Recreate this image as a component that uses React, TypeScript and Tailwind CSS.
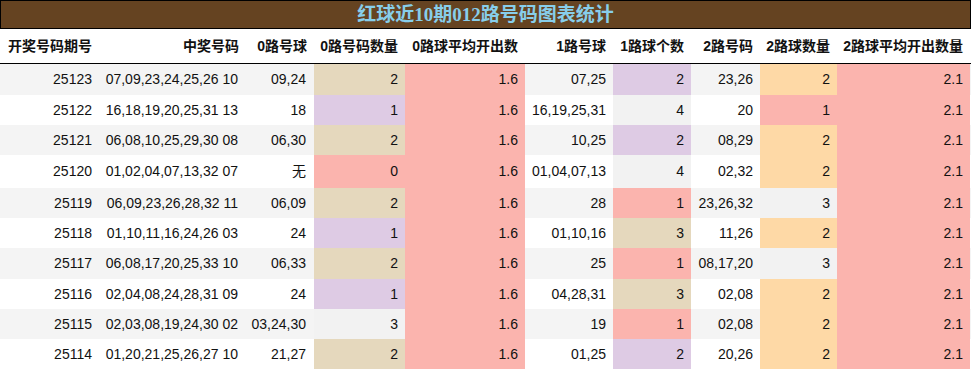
const SALMON = "bg-[#fbb4ae]";
const WHEAT = "bg-[#e5d8bd]";
const LAVENDER = "bg-[#decbe4]";
const PEACH = "bg-[#fed9a6]";
const GRAY = "bg-[#f2f2f2]";

const zeroColor: Record<number, string> = { 0: SALMON, 1: LAVENDER, 2: WHEAT, 3: GRAY };
const oneColor: Record<number, string> = { 1: SALMON, 2: LAVENDER, 3: WHEAT, 4: GRAY };
const twoColor: Record<number, string> = { 1: SALMON, 2: PEACH, 3: GRAY };

const headers = [
  "0路号球",
  "0路号码数量",
  "0路球平均开出数",
  "1路号球",
  "1路球个数",
  "2路号码",
  "2路球数量",
  "2路球平均开出数量",
];

const rows = [
  { id: "25123", win: "07,09,23,24,25,26 10", z: "09,24", zn: 2, o: "07,25", on: 2, t: "23,26", tn: 2, h: "h-[31px]" },
  { id: "25122", win: "16,18,19,20,25,31 13", z: "18", zn: 1, o: "16,19,25,31", on: 4, t: "20", tn: 1, h: "h-[30px]" },
  { id: "25121", win: "06,08,10,25,29,30 08", z: "06,30", zn: 2, o: "10,25", on: 2, t: "08,29", tn: 2, h: "h-[30px]" },
  { id: "25120", win: "01,02,04,07,13,32 07", z: "无", zn: 0, o: "01,04,07,13", on: 4, t: "02,32", tn: 2, h: "h-[33px]" },
  { id: "25119", win: "06,09,23,26,28,32 11", z: "06,09", zn: 2, o: "28", on: 1, t: "23,26,32", tn: 3, h: "h-[30px]" },
  { id: "25118", win: "01,10,11,16,24,26 03", z: "24", zn: 1, o: "01,10,16", on: 3, t: "11,26", tn: 2, h: "h-[30px]" },
  { id: "25117", win: "06,08,17,20,25,33 10", z: "06,33", zn: 2, o: "25", on: 1, t: "08,17,20", tn: 3, h: "h-[31px]" },
  { id: "25116", win: "02,04,08,24,28,31 09", z: "24", zn: 1, o: "04,28,31", on: 3, t: "02,08", tn: 2, h: "h-[30px]" },
  { id: "25115", win: "02,03,08,19,24,30 02", z: "03,24,30", zn: 3, o: "19", on: 1, t: "02,08", tn: 2, h: "h-[30px]" },
  { id: "25114", win: "01,20,21,25,26,27 10", z: "21,27", zn: 2, o: "01,25", on: 2, t: "20,26", tn: 2, h: "h-[30px]" },
];

const cols = "grid grid-cols-[100px_146px_68px_91px_120px_88px_78px_69px_77px_133px]";
const cell = "flex items-center justify-end pr-[7px] whitespace-nowrap";

export default function App() {
  return (
    <div className="w-[972px] h-[370px] bg-white overflow-hidden font-['Liberation_Sans','Noto_Sans_CJK_SC',sans-serif] text-[14px] text-[#111]">
      <div className="w-[971px]">
        {/* title */}
        <div className="h-[29px] bg-[#654321] border border-black flex items-center justify-center">
          <span className="font-['Liberation_Serif','Noto_Sans_CJK_SC',serif] font-bold text-[19px] text-[#87ceeb] leading-none">
            红球近10期012路号码图表统计
          </span>
        </div>

        {/* header */}
        <div className={`${cols} h-[35px] border-b border-black font-bold`}>
          <div className="flex items-center pl-[8px] whitespace-nowrap">开奖号码期号</div>
          <div className={cell}>中奖号码</div>
          {headers.map((h) => (
            <div key={h} className={cell}>
              {h}
            </div>
          ))}
        </div>

        {/* data */}
        {rows.map((r, i) => (
          <div key={r.id} className={`${cols} ${r.h} ${i % 2 === 0 ? "bg-[#f4f4f4]" : "bg-white"}`}>
            <div className={`${cell} pr-[8px]`}>{r.id}</div>
            <div className={`${cell} pr-[8px]`}>{r.win}</div>
            <div className={`${cell} pr-[8px]`}>{r.z}</div>
            <div className={`${cell} ${zeroColor[r.zn]}`}>{r.zn}</div>
            <div className={`${cell} ${SALMON}`}>1.6</div>
            <div className={cell}>{r.o}</div>
            <div className={`${cell} ${oneColor[r.on]}`}>{r.on}</div>
            <div className={cell}>{r.t}</div>
            <div className={`${cell} ${twoColor[r.tn]}`}>{r.tn}</div>
            <div className={`${cell} ${SALMON}`}>2.1</div>
          </div>
        ))}
      </div>
    </div>
  );
}
